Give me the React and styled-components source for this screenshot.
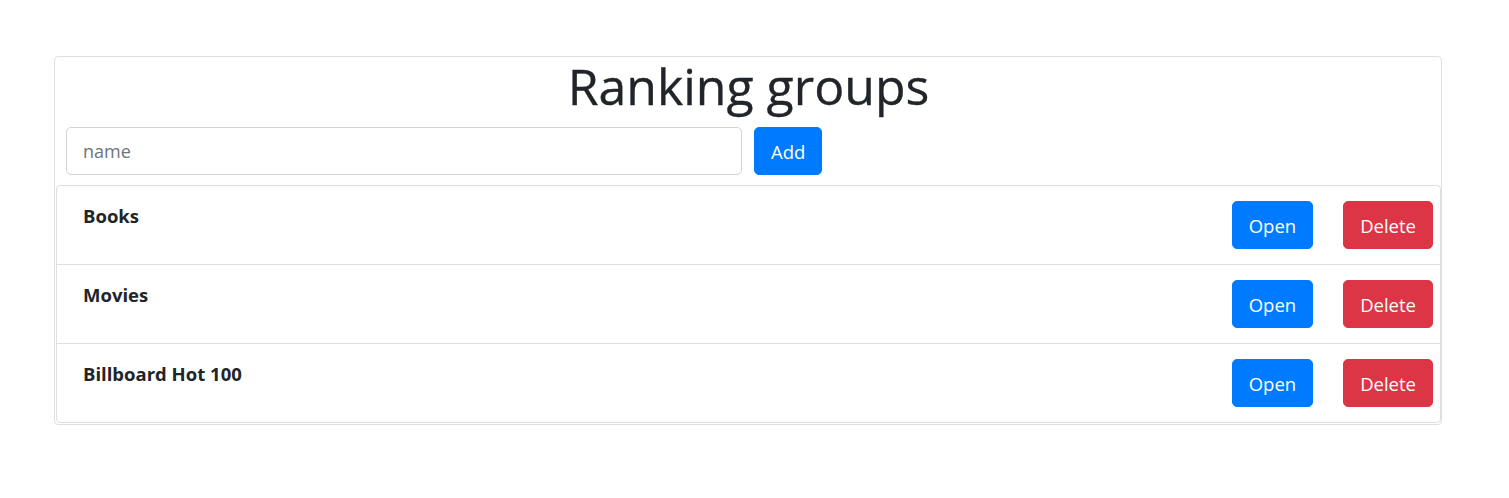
import React, { useState } from 'react'
import styled, { createGlobalStyle } from 'styled-components'

const GlobalStyle = createGlobalStyle`
  html, body {
    margin: 0;
    padding: 0;
    background: #fff;
  }
  body {
    font-family: 'Open Sans', 'Noto Sans', sans-serif;
    color: #212529;
  }
  * {
    box-sizing: border-box;
  }
`

const Page = styled.div`
  padding: 56px 67px 0 54px;
`

const Card = styled.div`
  border: 1px solid #dfdfdf;
  border-radius: 4px;
  padding: 0 0 1px 1px;
`

const Title = styled.h1`
  margin: 0;
  text-align: center;
  font-size: 50px;
  font-weight: 400;
  line-height: 58px;
  color: #212529;
  -webkit-text-stroke: 0.3px #212529;
`

const AddRow = styled.form`
  display: flex;
  gap: 12px;
  padding: 12px 10px 10px 10px;
`

const Input = styled.input`
  width: 676px;
  height: 48px;
  padding: 0 16px;
  font-family: inherit;
  font-size: 18px;
  color: #495057;
  border: 1px solid #ced4da;
  border-radius: 5px;
  outline: none;
  &::placeholder {
    color: #6c757d;
  }
`

const Button = styled.button`
  height: 48px;
  padding: 0 16px;
  font-family: inherit;
  font-size: 18.5px;
  color: #fff;
  background: ${p => (p.$variant === 'danger' ? '#dc3545' : '#007bff')};
  border: 1px solid ${p => (p.$variant === 'danger' ? '#dc3545' : '#007bff')};
  border-radius: 5px;
  cursor: pointer;
`

const List = styled.div`
  border: 1px solid #dfdfdf;
  border-radius: 4px;
`

const Row = styled.div`
  display: flex;
  align-items: flex-start;
  height: 78px;
  padding: 15px 7px 0 26px;
  & + & {
    height: 79px;
    border-top: 1px solid #dfdfdf;
  }
`

const Name = styled.div`
  flex: 1;
  padding-top: 3px;
  font-size: 18.5px;
  font-weight: 700;
  line-height: 24px;
`

const Actions = styled.div`
  display: flex;
  gap: 30px;
`

const initial = ['Books', 'Movies', 'Billboard Hot 100']

export default function App() {
  const [groups, setGroups] = useState(initial)
  const [name, setName] = useState('')

  const add = e => {
    e.preventDefault()
    if (!name.trim()) return
    setGroups([...groups, name.trim()])
    setName('')
  }

  return (
    <>
      <GlobalStyle />
      <Page>
        <Card>
          <Title>Ranking groups</Title>
          <AddRow onSubmit={add}>
            <Input placeholder="name" value={name} onChange={e => setName(e.target.value)} />
            <Button type="submit">Add</Button>
          </AddRow>
          <List>
            {groups.map((g, i) => (
              <Row key={i}>
                <Name>{g}</Name>
                <Actions>
                  <Button type="button">Open</Button>
                  <Button type="button" $variant="danger" onClick={() => setGroups(groups.filter((_, j) => j !== i))}>
                    Delete
                  </Button>
                </Actions>
              </Row>
            ))}
          </List>
        </Card>
      </Page>
    </>
  )
}
